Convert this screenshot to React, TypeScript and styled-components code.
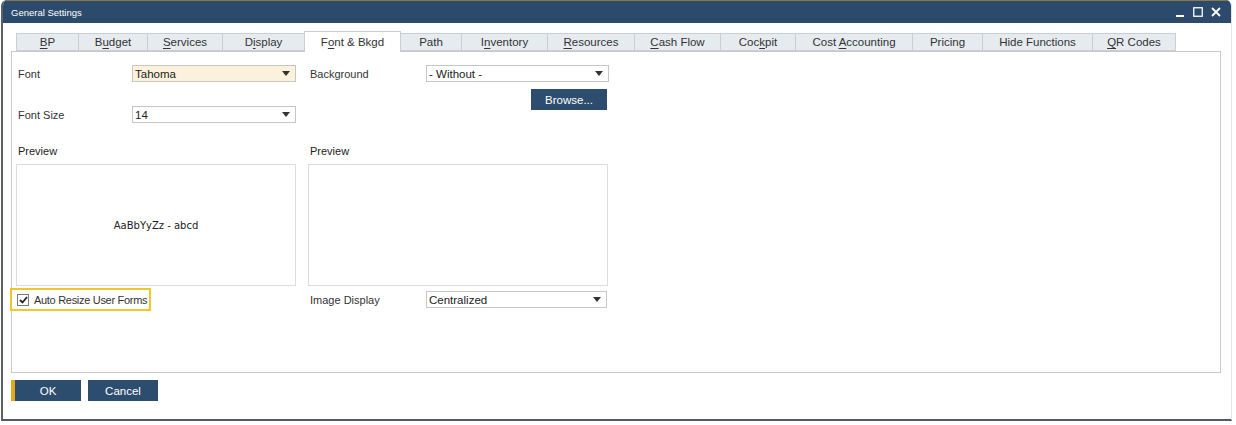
import styled, { createGlobalStyle } from 'styled-components';

const GlobalStyle = createGlobalStyle`
  html, body {
    margin: 0;
    padding: 0;
    background: #ffffff;
  }
  body {
    font-family: 'Liberation Sans', Arial, sans-serif;
    font-size: 11px;
    color: #222;
  }
`;

const Window = styled.div`
  width: 1231px;
  height: 421px;
  margin-left: 1px;
  display: flex;
  flex-direction: column;
  background: #fff;
  border-left: 2px solid #5b6067;
  border-right: 1px solid #e4e4e4;
  border-bottom: 2px solid #4f5b66;
  border-radius: 6px 6px 0 0;
  box-sizing: border-box;
  overflow: hidden;
`;

const TitleBar = styled.div`
  height: 23px;
  flex: none;
  background: #2c4a6b;
  border-top: 1px solid #8a7a4a;
  box-sizing: border-box;
  display: flex;
  align-items: center;
  justify-content: space-between;
  padding: 0 10px 0 8px;
  color: #fff;
  font-size: 9.5px;
`;

const WinControls = styled.div`
  display: flex;
  align-items: center;
  gap: 8px;
`;

const Body = styled.div`
  flex: 1;
  display: flex;
  flex-direction: column;
  padding: 8px 10px 0 8px;
`;

const TabRow = styled.div`
  display: flex;
  align-items: flex-end;
  height: 20px;
  padding-left: 5px;
  position: relative;
  z-index: 1;
`;

const Tab = styled.div<{ $w: number; $active?: boolean }>`
  width: ${(p) => p.$w + 1}px;
  flex: none;
  box-sizing: border-box;
  height: ${(p) => (p.$active ? 21 : 18)}px;
  margin-bottom: ${(p) => (p.$active ? -1 : 0)}px;
  display: flex;
  align-items: center;
  justify-content: center;
  background: ${(p) => (p.$active ? '#ffffff' : '#e6ebf0')};
  border: 1px solid #c9ced4;
  border-bottom: ${(p) => (p.$active ? 'none' : '1px solid #c9ced4')};
  margin-right: -1px;
  color: #333;
  font-size: 11.5px;
  white-space: pre;
`;

const Key = styled.span`
  text-decoration: underline;
  text-underline-offset: 2px;
`;

const Panel = styled.div`
  height: 322px;
  box-sizing: border-box;
  border: 1px solid #c8c8c8;
  background: #fff;
  display: flex;
  padding: 13px 0 0 4px;
  gap: 12px;
`;

const Column = styled.div<{ $w: number }>`
  width: ${(p) => p.$w}px;
  display: flex;
  flex-direction: column;
`;

const FieldRow = styled.div<{ $top?: number; $labelW: number }>`
  display: grid;
  grid-template-columns: ${(p) => p.$labelW}px 1fr;
  align-items: center;
  margin-top: ${(p) => p.$top ?? 0}px;
  padding-left: 2px;
`;

const Label = styled.span<{ $tight?: boolean }>`
  color: #333;
  font-size: 11px;
  letter-spacing: ${(p) => (p.$tight ? '-0.3px' : '0')};
`;

const Select = styled.div<{ $bg?: string; $inset?: number }>`
  height: 17px;
  box-sizing: border-box;
  border: 1px solid #c6c6c6;
  background: ${(p) => p.$bg ?? '#fff'};
  display: flex;
  align-items: center;
  justify-content: space-between;
  padding: 0 5px 0 2px;
  margin-right: ${(p) => p.$inset ?? 0}px;
  font-size: 11.5px;
  color: #222;
`;

const Arrow = styled.span`
  width: 0;
  height: 0;
  border-left: 4px solid transparent;
  border-right: 4px solid transparent;
  border-top: 5px solid #333;
`;

const BrowseRow = styled.div`
  display: flex;
  justify-content: flex-end;
  margin-top: 7px;
  padding-right: 2px;
`;

const Button = styled.button<{ $w: number; $primary?: boolean }>`
  width: ${(p) => p.$w}px;
  height: 21px;
  border: none;
  border-left: ${(p) => (p.$primary ? '4px solid #e2a91e' : 'none')};
  background: #2d4d6e;
  color: #fff;
  font-family: 'Liberation Sans', Arial, sans-serif;
  font-size: 11.5px;
  padding: 0;
  cursor: pointer;
`;

const PreviewLabel = styled.div<{ $top: number }>`
  margin-top: ${(p) => p.$top}px;
  padding-left: 2px;
  height: 14px;
  line-height: 14px;
`;

const PreviewBox = styled.div<{ $w: number }>`
  width: ${(p) => p.$w}px;
  height: 122px;
  margin-top: 6px;
  box-sizing: border-box;
  border: 1px solid #dcdcdc;
  display: flex;
  align-items: center;
  justify-content: center;
  font-family: 'DejaVu Sans', Verdana, sans-serif;
  font-size: 10px;
  color: #222;
  padding-top: 1px;
`;

const CheckRow = styled.div`
  margin-top: 4px;
  margin-left: -4px;
  width: 137px;
  height: 19px;
  outline: 2px solid #f0c62e;
  outline-offset: 0;
  display: flex;
  align-items: center;
  gap: 5px;
  padding-left: 5px;
  box-sizing: border-box;
  white-space: nowrap;
`;

const CheckBox = styled.span`
  width: 12px;
  height: 12px;
  box-sizing: border-box;
  border: 1px solid #7a7a7a;
  background: #fff;
  display: flex;
  align-items: center;
  justify-content: center;
`;

const Footer = styled.div`
  display: flex;
  gap: 7px;
  margin-top: 7px;
`;

const tabs: { w: number; pre: string; key: string; post: string; active?: boolean }[] = [
  { w: 62, pre: '', key: 'B', post: 'P' },
  { w: 69, pre: 'B', key: 'u', post: 'dget' },
  { w: 75, pre: '', key: 'S', post: 'ervices' },
  { w: 82, pre: 'D', key: 'i', post: 'splay' },
  { w: 96, pre: 'F', key: 'o', post: 'nt & Bkgd', active: true },
  { w: 61, pre: 'Path', key: '', post: '' },
  { w: 86, pre: 'I', key: 'n', post: 'ventory' },
  { w: 87, pre: '', key: 'R', post: 'esources' },
  { w: 86, pre: '', key: 'C', post: 'ash Flow' },
  { w: 75, pre: 'Coc', key: 'k', post: 'pit' },
  { w: 117, pre: 'Cost ', key: 'A', post: 'ccounting' },
  { w: 70, pre: 'Pricing', key: '', post: '' },
  { w: 110, pre: 'Hide Functions', key: '', post: '' },
  { w: 83, pre: '', key: 'Q', post: 'R Codes' },
];

export default function App() {
  return (
    <>
      <GlobalStyle />
      <Window>
        <TitleBar>
          <span>General Settings</span>
          <WinControls>
            <svg width="10" height="10" viewBox="0 0 10 10">
              <rect x="1" y="8" width="8" height="2" fill="#fff" />
            </svg>
            <svg width="10" height="10" viewBox="0 0 10 10">
              <rect x="0.75" y="0.75" width="8.5" height="8.5" fill="none" stroke="#fff" strokeWidth="1.3" />
            </svg>
            <svg width="10" height="10" viewBox="0 0 10 10">
              <path d="M1 1 L9 9 M9 1 L1 9" stroke="#fff" strokeWidth="1.8" />
            </svg>
          </WinControls>
        </TitleBar>
        <Body>
          <TabRow>
            {tabs.map((t) => (
              <Tab key={t.pre + t.key + t.post} $w={t.w} $active={t.active}>
                <span>
                  {t.pre}
                  {t.key && <Key>{t.key}</Key>}
                  {t.post}
                </span>
              </Tab>
            ))}
          </TabRow>
          <Panel>
            <Column $w={280}>
              <FieldRow $labelW={114}>
                <Label>Font</Label>
                <Select $bg="#fcf2dc">
                  Tahoma
                  <Arrow />
                </Select>
              </FieldRow>
              <FieldRow $labelW={114} $top={24}>
                <Label>Font Size</Label>
                <Select>
                  14
                  <Arrow />
                </Select>
              </FieldRow>
              <PreviewLabel $top={21}>Preview</PreviewLabel>
              <PreviewBox $w={280}>AaBbYyZz - abcd</PreviewBox>
              <CheckRow>
                <CheckBox>
                  <svg width="9" height="8" viewBox="0 0 9 8">
                    <path d="M1 4 L3.5 6.5 L8 1" fill="none" stroke="#222" strokeWidth="1.8" />
                  </svg>
                </CheckBox>
                <Label $tight>Auto Resize User Forms</Label>
              </CheckRow>
            </Column>
            <Column $w={301}>
              <FieldRow $labelW={116}>
                <Label>Background</Label>
                <Select>
                  - Without -
                  <Arrow />
                </Select>
              </FieldRow>
              <BrowseRow>
                <Button $w={76}>Browse...</Button>
              </BrowseRow>
              <PreviewLabel $top={34}>Preview</PreviewLabel>
              <PreviewBox $w={300}></PreviewBox>
              <FieldRow $labelW={116} $top={5}>
                <Label>Image Display</Label>
                <Select $inset={2}>
                  Centralized
                  <Arrow />
                </Select>
              </FieldRow>
            </Column>
          </Panel>
          <Footer>
            <Button $w={70} $primary>
              OK
            </Button>
            <Button $w={70}>Cancel</Button>
          </Footer>
        </Body>
      </Window>
    </>
  );
}
